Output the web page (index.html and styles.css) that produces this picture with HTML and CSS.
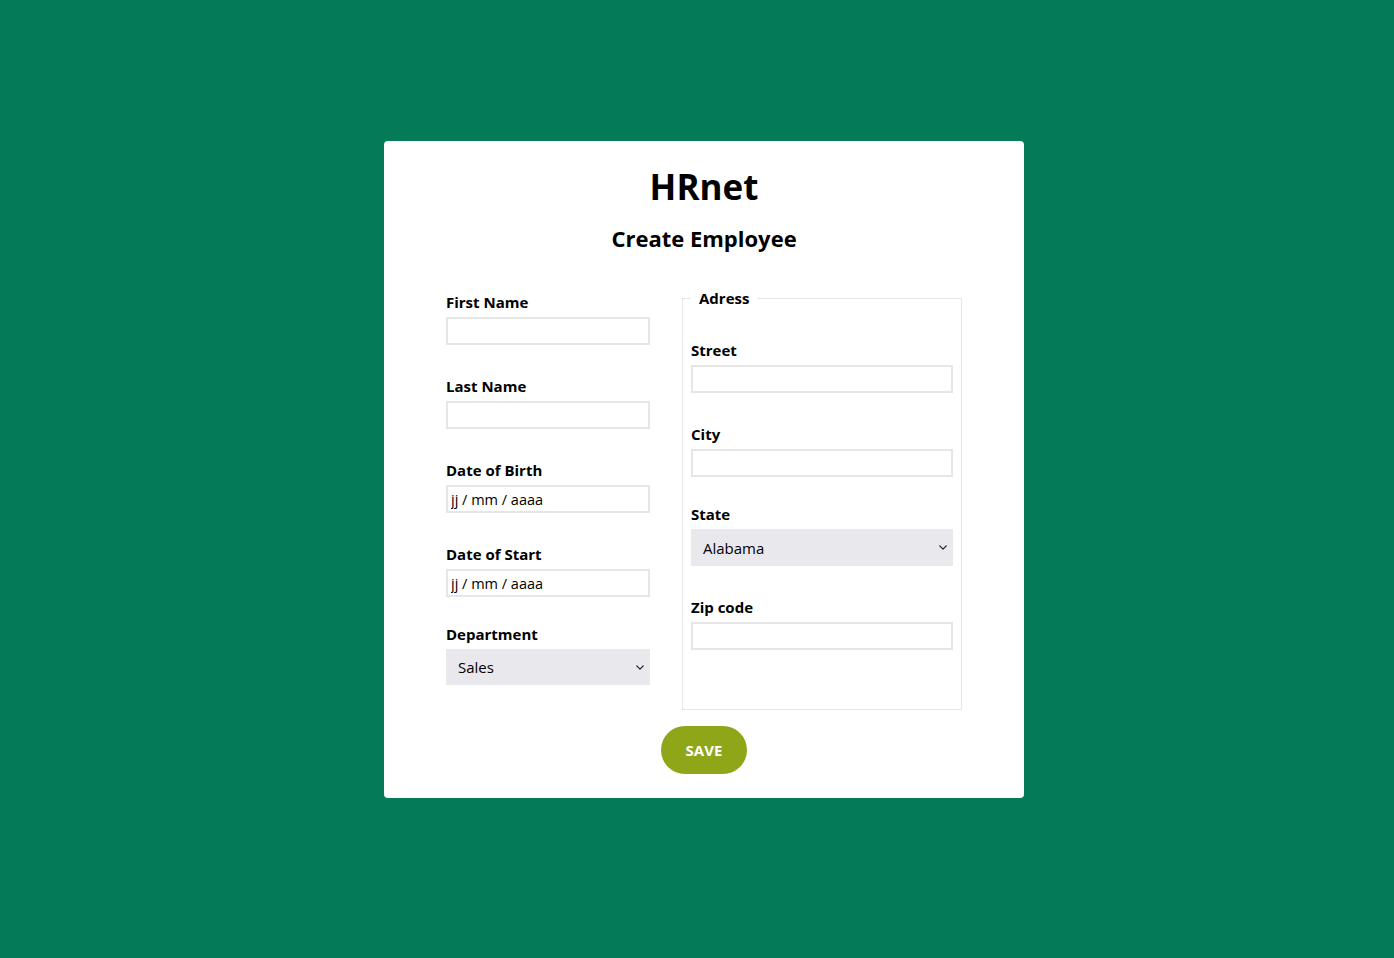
FILE: index.html
```html
<!DOCTYPE html>
<html lang="fr">
<head>
<meta charset="utf-8">
<title>HRnet</title>
<link rel="stylesheet" href="styles.css">
</head>
<body>
<main class="page">
  <section class="card">
    <h1 class="title">HRnet</h1>
    <h2 class="subtitle">Create Employee</h2>
    <form class="form">
      <div class="row">
        <div class="col">
          <div class="field">
            <label class="label" for="first">First Name</label>
            <input class="input" id="first" type="text">
          </div>
          <div class="field">
            <label class="label" for="last">Last Name</label>
            <input class="input" id="last" type="text">
          </div>
          <div class="field">
            <label class="label" for="dob">Date of Birth</label>
            <input class="input date" id="dob" type="text" placeholder="jj / mm / aaaa">
          </div>
          <div class="field">
            <label class="label" for="dos">Date of Start</label>
            <input class="input date" id="dos" type="text" placeholder="jj / mm / aaaa">
          </div>
          <div class="field field-select">
            <label class="label" for="dept">Department</label>
            <div class="select">
              <span>Sales</span>
              <svg class="chev" viewBox="0 0 10 6" width="8" height="5"><path d="M1 1l4 4 4-4" fill="none" stroke="#222" stroke-width="1.6" stroke-linecap="round" stroke-linejoin="round"/></svg>
            </div>
          </div>
        </div>
        <fieldset class="address">
          <legend class="legend">Adress</legend>
          <div class="field first">
            <label class="label" for="street">Street</label>
            <input class="input wide" id="street" type="text">
          </div>
          <div class="field">
            <label class="label" for="city">City</label>
            <input class="input wide" id="city" type="text">
          </div>
          <div class="field field-select">
            <label class="label" for="state">State</label>
            <div class="select wide">
              <span>Alabama</span>
              <svg class="chev" viewBox="0 0 10 6" width="8" height="5"><path d="M1 1l4 4 4-4" fill="none" stroke="#222" stroke-width="1.6" stroke-linecap="round" stroke-linejoin="round"/></svg>
            </div>
          </div>
          <div class="field">
            <label class="label" for="zip">Zip code</label>
            <input class="input wide" id="zip" type="text">
          </div>
        </fieldset>
      </div>
      <button class="save" type="button">SAVE</button>
    </form>
  </section>
</main>
</body>
</html>
```
FILE: styles.css
```css
* { box-sizing: border-box; }
html, body { margin: 0; padding: 0; }
body {
  background: #057a59;
  font-family: "Open Sans", "Noto Sans", sans-serif;
  color: #000;
  min-height: 958px;
}
.page {
  display: flex;
  justify-content: center;
  padding: 141px 0 0 14px;
}
.card {
  width: 640px;
  background: #fff;
  border-radius: 4px;
  padding: 24px 0 24px;
  display: flex;
  flex-direction: column;
  align-items: center;
}
.title {
  margin: 0;
  font-size: 35px;
  line-height: 44px;
  font-weight: 700;
}
.subtitle {
  margin: 13px 0 0;
  font-size: 22px;
  line-height: 32px;
  font-weight: 700;
}
.form {
  margin-top: 34px;
  display: flex;
  flex-direction: column;
  align-items: center;
}
.row {
  display: flex;
  gap: 32px;
  align-items: flex-start;
}
.col {
  width: 204px;
  padding-top: 4px;
}
.field { display: flex; flex-direction: column; }
.field + .field { margin-top: 31px; }
.field + .field-select { margin-top: 27px; }
.label {
  font-size: 15px;
  font-weight: 700;
  line-height: 20px;
  margin-bottom: 5px;
}
.field-select .label { margin-bottom: 5px; }
.input {
  width: 204px;
  height: 28px;
  border: 2px solid #e6e6e6;
  border-radius: 0;
  padding: 0 3px;
  font-family: inherit;
  font-size: 14.5px;
  outline: none;
  background: #fff;
}
.input.wide { width: 262px; }
.date::placeholder { color: #000; opacity: 1; }
.select {
  width: 204px;
  height: 36px;
  background: #e9e9ed;
  display: flex;
  align-items: center;
  justify-content: space-between;
  padding: 0 6px 0 12px;
  font-size: 15px;
}
.select.wide { width: 262px; height: 37px; }
.address {
  margin: 0;
  width: 280px;
  height: 422px;
  border: 1px solid #e6e6e6;
  padding: 0 8px;
}
.legend {
  padding: 0 8px;
  font-size: 15px;
  font-weight: 700;
  line-height: 20px;
}
.field.first { margin-top: 32px; }
.save {
  margin-top: 16px;
  width: 86px;
  height: 48px;
  border: none;
  border-radius: 24px;
  background: #8fa618;
  color: #fff;
  font-family: inherit;
  font-size: 15px;
  font-weight: 700;
  cursor: pointer;
}
```
